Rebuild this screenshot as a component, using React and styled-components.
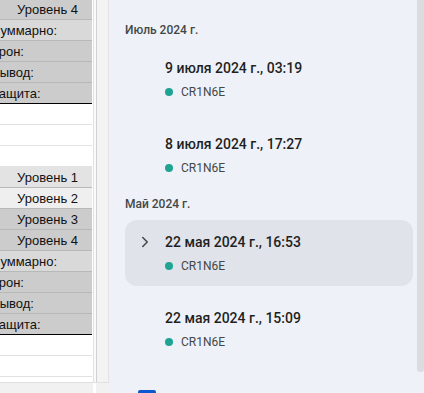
import React from 'react'
import styled, { createGlobalStyle } from 'styled-components'
import { ChevronRight } from 'lucide-react'

const GlobalStyle = createGlobalStyle`
  html, body {
    margin: 0;
    padding: 0;
    background: #fff;
  }
  body {
    font-family: Roboto, 'Noto Sans', sans-serif;
  }
`

// spreadsheet rows (left, scrolled)
const topRows = [
  { text: 'Уровень 4', kind: 'level', bg: '#cccccc', first: true },
  { text: 'Суммарно:', kind: 'label', bg: '#d9d9d9' },
  { text: 'Урон:', kind: 'label', bg: '#cccccc' },
  { text: 'Вывод:', kind: 'label', bg: '#cccccc' },
  { text: 'Защита:', kind: 'label', bg: '#cccccc', last: true },
  { kind: 'empty' },
  { kind: 'empty' },
  { kind: 'empty' },
  { text: 'Уровень 1', kind: 'level', bg: '#e3e3e3' },
  { text: 'Уровень 2', kind: 'level', bg: '#efefef' },
  { text: 'Уровень 3', kind: 'level', bg: '#cccccc' },
  { text: 'Уровень 4', kind: 'level', bg: '#cccccc' },
  { text: 'Суммарно:', kind: 'label', bg: '#d9d9d9' },
  { text: 'Урон:', kind: 'label', bg: '#cccccc' },
  { text: 'Вывод:', kind: 'label', bg: '#cccccc' },
  { text: 'Защита:', kind: 'label', bg: '#cccccc', last: true },
  { kind: 'empty' },
  { kind: 'empty' },
  { kind: 'empty' },
]

const groups = [
  {
    month: 'Июль 2024 г.',
    items: [
      { date: '9 июля 2024 г., 03:19', author: 'CR1N6E' },
      { date: '8 июля 2024 г., 17:27', author: 'CR1N6E' },
    ],
  },
  {
    month: 'Май 2024 г.',
    items: [
      { date: '22 мая 2024 г., 16:53', author: 'CR1N6E', active: true },
      { date: '22 мая 2024 г., 15:09', author: 'CR1N6E' },
    ],
  },
]

const App = () => {
  return (
    <>
      <GlobalStyle />
      <Screen>
        <Sheet>
          <SheetBody>
            <Grid>
              <Rows>
                {topRows.map((row, i) => (
                  <Row
                    key={i}
                    $bg={row.bg}
                    $kind={row.kind}
                    $first={row.first}
                    $last={row.last}
                  >
                    {row.text}
                  </Row>
                ))}
              </Rows>
            </Grid>
            <Gutter />
            <SideStrip />
          </SheetBody>
          <SheetFooter>
            <FooterCell $w={93} />
            <FooterGap />
            <FooterCell $w={13} />
          </SheetFooter>
        </Sheet>

        <Panel>
          <ListArea>
            <List>
              {groups.map((group) => (
                <Section key={group.month}>
                  <Month>{group.month}</Month>
                  <Cards>
                    {group.items.map((item) => (
                      <Card key={item.date} $active={item.active}>
                        {item.active && (
                          <Chevron>
                            <ChevronRight size={18} strokeWidth={2} />
                          </Chevron>
                        )}
                        <DateText>{item.date}</DateText>
                        <Meta>
                          <Dot />
                          <Author>{item.author}</Author>
                        </Meta>
                      </Card>
                    ))}
                  </Cards>
                </Section>
              ))}
            </List>
            <Track>
              <Thumb />
            </Track>
          </ListArea>
          <Footer>
            <Checkbox />
            <FooterLabel>Показывать изменения</FooterLabel>
          </Footer>
        </Panel>
      </Screen>
    </>
  )
}

export default App

const Screen = styled.div`
  display: flex;
  width: 424px;
  height: 393px;
  overflow: hidden;
  background: #fff;
`

const Sheet = styled.div`
  display: flex;
  flex-direction: column;
  width: 109px;
  flex-shrink: 0;
`

const SheetBody = styled.div`
  display: flex;
  height: 382px;
  flex-shrink: 0;
  overflow: hidden;
`

const Grid = styled.div`
  width: 93px;
  overflow: hidden;
  border-right: 1px solid #e2e2e2;
`

const Rows = styled.div`
  margin-left: -9px;
  width: 101px;
`

const Row = styled.div`
  box-sizing: border-box;
  height: 21px;
  margin-top: ${(p) => (p.$first ? '-1px' : '0')};
  padding: ${(p) => (p.$kind === 'level' ? '0 14px 0 0' : '0')};
  display: flex;
  align-items: center;
  justify-content: ${(p) => (p.$kind === 'level' ? 'flex-end' : 'flex-start')};
  background: ${(p) => p.$bg || '#fff'};
  border-bottom: 1px solid
    ${(p) => (p.$last ? '#000' : p.$kind === 'empty' ? '#e2e2e2' : '#b8b8b8')};
  font-family: 'Liberation Sans', Arial, sans-serif;
  font-size: 13px;
  color: #111;
  white-space: nowrap;
`

const Gutter = styled.div`
  width: 2px;
  background: #fafafa;
  border-right: 1px solid #d0d0d0;
`

const SideStrip = styled.div`
  width: 11px;
  background: #f3f3f3;
  border-right: 1px solid #e3e3e3;
`

const SheetFooter = styled.div`
  display: flex;
  flex: 1;
  border-top: 1px solid #e0e0e0;
`

const FooterCell = styled.div`
  width: ${(p) => p.$w}px;
  background: #f1f1f1;
`

const FooterGap = styled.div`
  width: 3px;
  background: #fff;
`

const Panel = styled.div`
  flex: 1;
  display: flex;
  flex-direction: column;
  overflow: hidden;
  background: #eef2f8;
`

const ListArea = styled.div`
  display: flex;
  height: 380px;
  flex-shrink: 0;
  overflow: hidden;
`

const List = styled.div`
  flex: 1;
  padding: 14px 4px 0 16px;
`

const Section = styled.section`
  display: flex;
  flex-direction: column;
`

const Month = styled.div`
  height: 32px;
  display: flex;
  align-items: center;
  font-size: 12px;
  font-weight: 500;
  color: #444746;
`

const Cards = styled.div`
  display: flex;
  flex-direction: column;
  gap: 10px;
`

const Card = styled.div`
  position: relative;
  box-sizing: border-box;
  height: 66px;
  padding: 13px 0 0 40px;
  border-radius: 12px;
  background: ${(p) => (p.$active ? '#e0e3e9' : 'transparent')};
`

const Chevron = styled.span`
  position: absolute;
  left: 11px;
  top: 13px;
  display: flex;
  color: #444746;
`

const DateText = styled.div`
  height: 18px;
  line-height: 18px;
  font-size: 14px;
  font-weight: 500;
  color: #1f1f1f;
  white-space: nowrap;
`

const Meta = styled.div`
  display: flex;
  align-items: center;
  gap: 8px;
  height: 18px;
  margin-top: 6px;
`

const Dot = styled.span`
  width: 8px;
  height: 8px;
  border-radius: 50%;
  background: #1fa393;
`

const Author = styled.span`
  font-size: 12px;
  color: #444746;
`

const Track = styled.div`
  width: 7px;
`

const Thumb = styled.div`
  height: 372px;
  background: #dadce0;
  border-radius: 0 0 4px 4px;
`

const Footer = styled.div`
  display: flex;
  flex-shrink: 0;
  align-items: flex-start;
  gap: 12px;
  padding: 10px 0 0 29px;
`

const Checkbox = styled.span`
  width: 18px;
  height: 18px;
  flex-shrink: 0;
  border-radius: 2px;
  background: #0b57d0;
`

const FooterLabel = styled.span`
  font-size: 14px;
  line-height: 18px;
  color: #1f1f1f;
`
